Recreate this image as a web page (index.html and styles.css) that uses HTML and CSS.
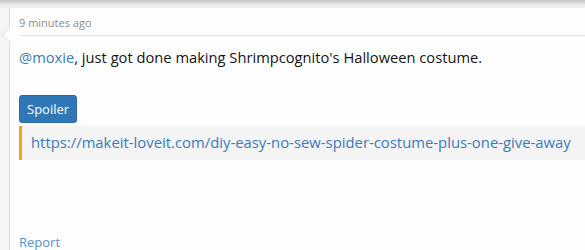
FILE: index.html
```html
<!DOCTYPE html>
<html lang="en">
<head>
    <meta charset="UTF-8">
    <meta name="viewport" content="width=device-width, initial-scale=1.0">
    <title>Post</title>
    <link rel="stylesheet" href="styles.css">
</head>
<body>
    <div class="topbar"></div>
    <div class="page">
        <div class="message">
            <div class="message-meta">9 minutes ago</div>
            <div class="message-body">
                <p class="message-text"><a href="#" class="mention">@moxie</a>, just got done making Shrimpcognito's Halloween costume.</p>
                <button type="button" class="spoiler-btn">Spoiler</button>
                <div class="quote">
                    <a href="#">https://makeit-loveit.com/diy-easy-no-sew-spider-costume-plus-one-give-away</a>
                </div>
            </div>
            <div class="message-actions">
                <a href="#">Report</a>
            </div>
        </div>
    </div>
</body>
</html>
```

FILE: styles.css
```css
body {
    font-family: "Open Sans", "Noto Sans", sans-serif;
    background-color: #f5f5f5;
    margin: 0;
    padding: 0;
    overflow: hidden;
}
a {
    color: #3a7bb8;
    text-decoration: none;
}
.topbar {
    height: 8px;
    background: linear-gradient(#c2c2c2, #e8e8e8 55%, #f5f5f5);
}
.page {
    display: flex;
    padding-left: 9px;
}
.message {
    position: relative;
    flex: 1;
    background-color: #fefefe;
    border-left: 1px solid #dfdfdf;
    padding-left: 9px;
    height: 242px;
}
.message::before {
    content: "";
    position: absolute;
    left: -8px;
    top: 19px;
    border-top: 8px solid transparent;
    border-bottom: 8px solid transparent;
    border-right: 8px solid #dfdfdf;
}
.message::after {
    content: "";
    position: absolute;
    left: -7px;
    top: 20px;
    border-top: 7px solid transparent;
    border-bottom: 7px solid transparent;
    border-right: 7px solid #fefefe;
}
.message-meta {
    font-size: 11px;
    line-height: 18px;
    color: #8c8c8c;
    padding-top: 6px;
    padding-bottom: 3px;
    border-bottom: 1px solid #e6e6e6;
}
.message-text {
    font-size: 14.7px;
    line-height: 21px;
    color: #141414;
    margin: 11px 0 27px;
}
.spoiler-btn {
    font-family: inherit;
    font-size: 13px;
    color: #fff;
    background-color: #2f77b6;
    border: 1px solid #2a6aa3;
    border-radius: 3px;
    height: 28px;
    padding: 0 7px;
    display: block;
}
.quote {
    margin-top: 3px;
    background-color: #f4f4f4;
    border-left: 3px solid #f6a11b;
    padding: 6px 0 7px 9px;
    font-size: 14.85px;
    line-height: 21px;
}
.message-actions {
    margin-top: 73px;
    font-size: 13px;
    line-height: 18px;
}
.message-actions a {
    color: #5a8fc7;
}
```
